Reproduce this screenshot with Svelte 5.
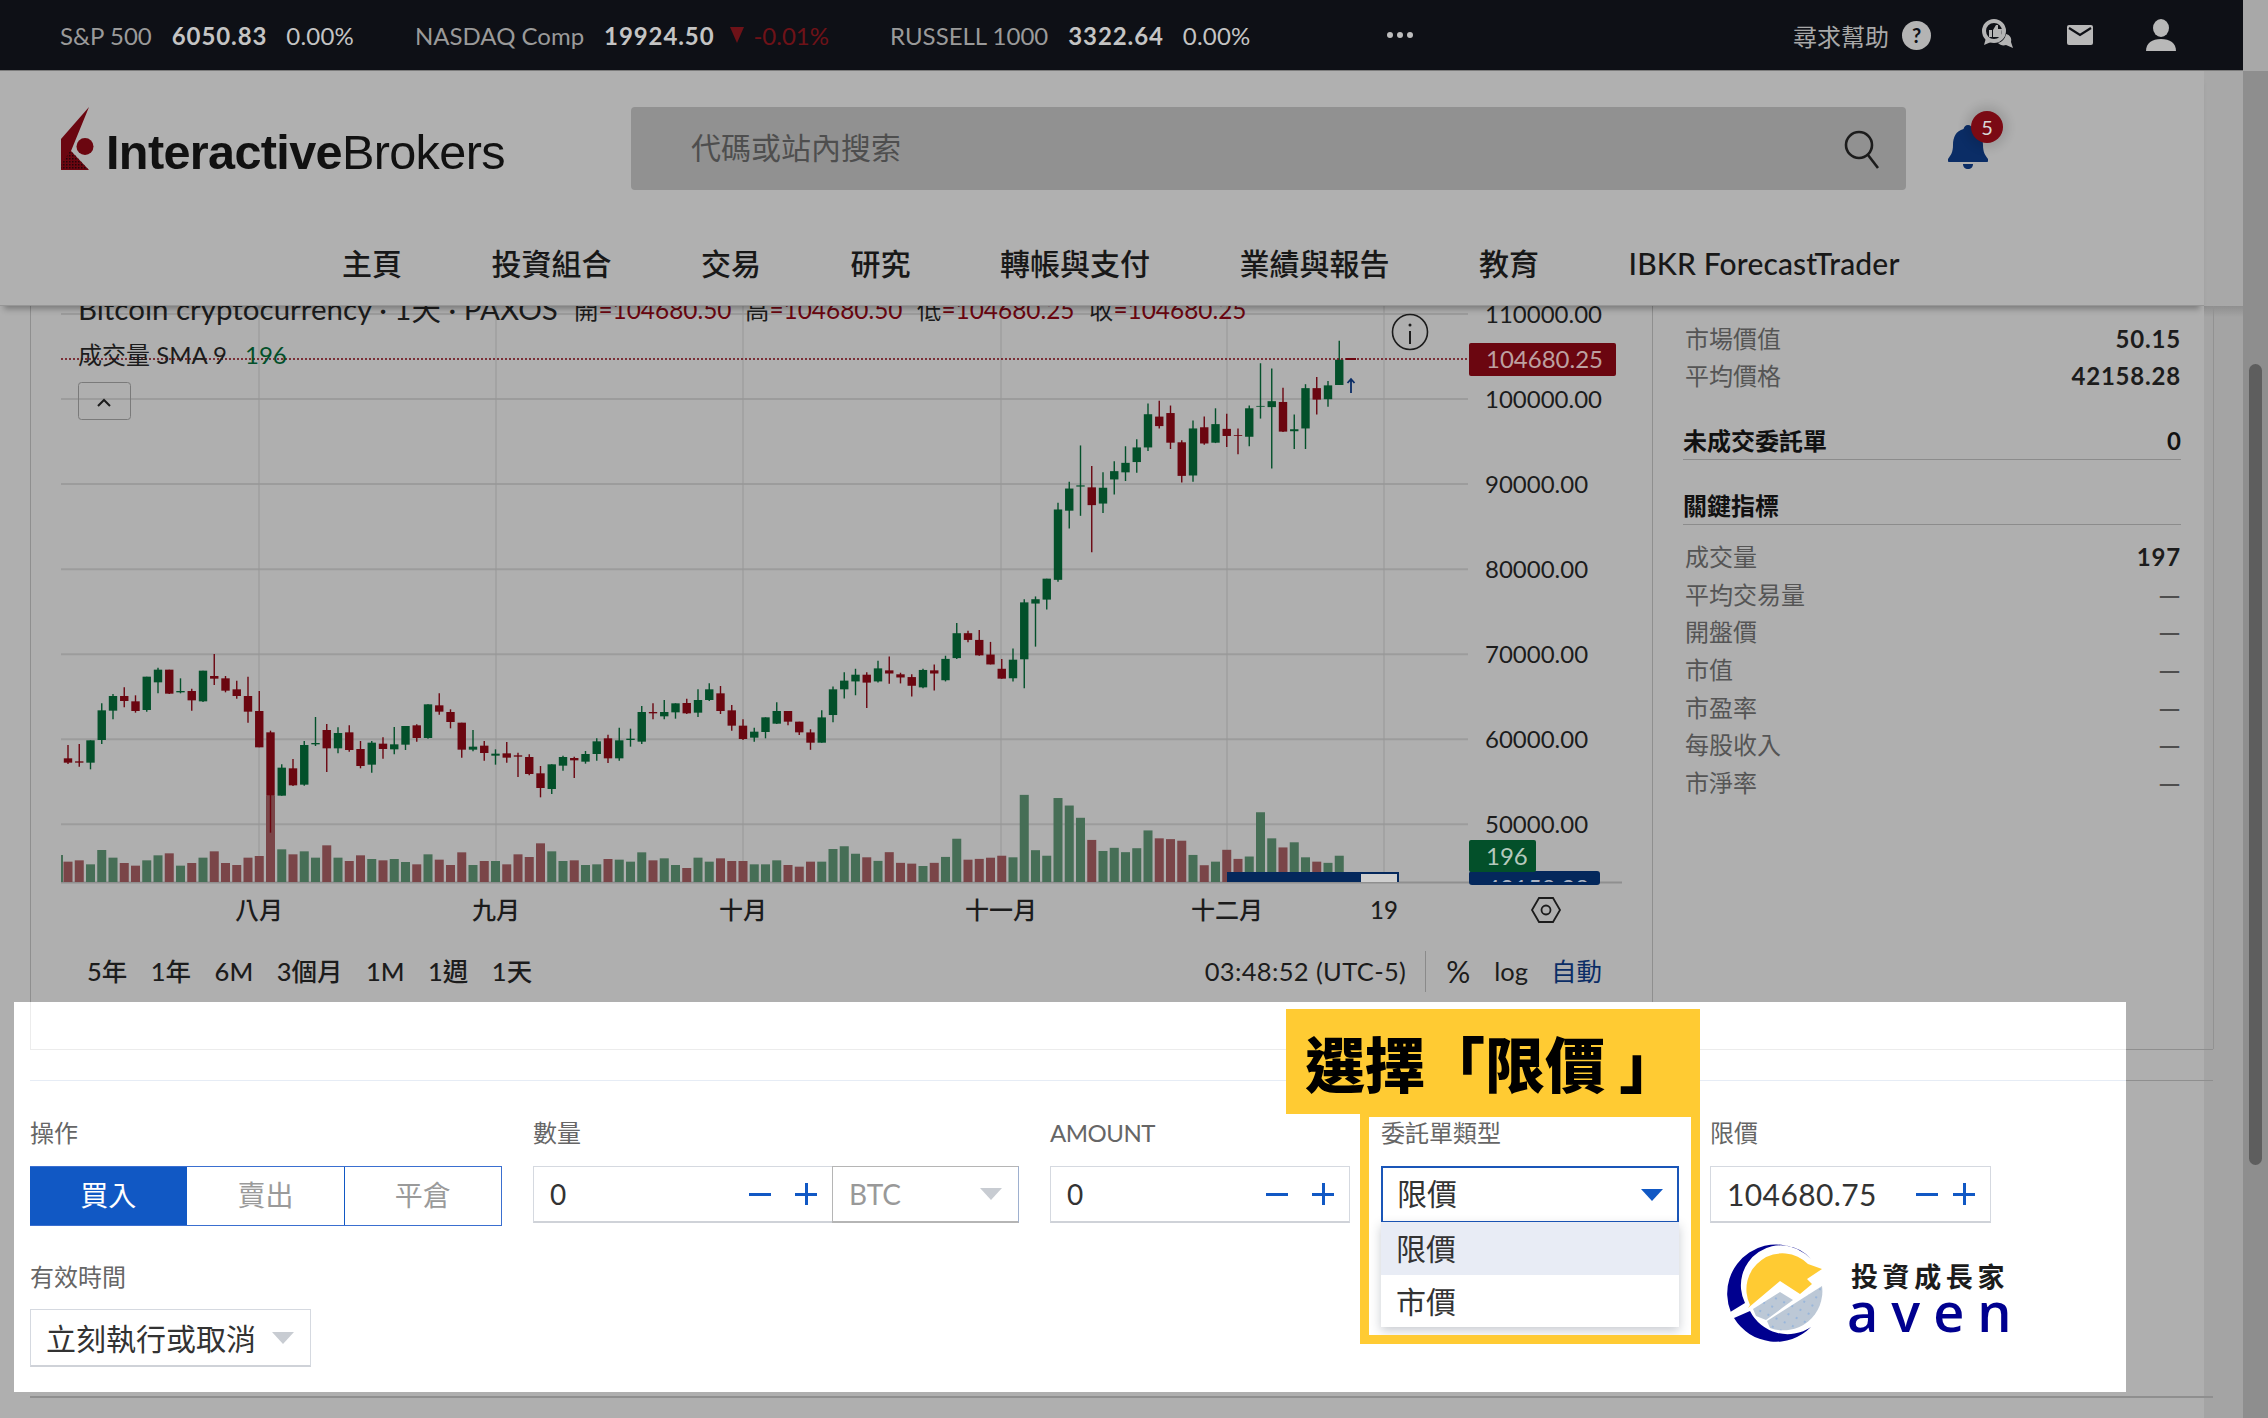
<script>
	// [colour, bodyTop, bodyBottom, wickTop, wickBottom, volumeTop], sampled off the chart
	const early = [
		['r',415,428,375,432,725],['r',424,428,372,440,721],['g',361,428,361,448,733],['g',271,360,250,372,690],
		['g',228,272,222,298,713],['r',228,243,202,262,729],['r',244,273,226,278,737],['g',170,270,170,275,721],
		['g',149,187,143,220,706],['r',149,221,149,222,700],['g',213,217,175,220,737],['r',213,241,206,272,729],
		['g',152,244,152,246,713],['r',168,176,102,195,694],['r',175,212,168,217,729],['r',208,228,182,236,735],
		['r',228,275,170,308,713],['r',273,382,213,382,708],['r',337,527,332,638,527],['g',443,527,433,527,688],
		['r',445,496,417,498,703],['g',375,494,363,497,694],['g',369,373,291,378,713],['r',330,385,312,456,676],
		['g',339,385,322,400,713],['r',337,390,316,395,723],['r',387,438,363,445,706],['g',368,434,363,458,717],
		['r',371,387,352,416,721],['g',373,388,321,403,717],['g',318,374,318,390,726],['r',316,354,313,365,733],
		['g',253,354,253,356,703],['r',256,275,220,284,719],['r',276,306,268,325,735],['r',308,389,308,413,697],
		['g',380,389,330,394,735],['r',377,399,363,422,723],['g',401,407,388,434,723],['r',400,413,366,428,733],
		['r',406,410,398,471,703],['r',411,462,403,466,711],['r',460,504,438,532,670],['g',433,507,433,522,694],
		['g',411,437,407,452,723],['r',414,421,410,474,721],['g',402,425,393,431,735],['g',364,402,355,422,733],
		['r',355,415,344,429,717],['g',361,415,323,422,719],['g',356,360,326,380,725],['g',276,365,258,372,697],
		['r',276,280,250,298,721],['g',276,289,240,298,715],['g',250,277,250,296,735],['r',249,280,236,282,744],
		['g',240,278,208,291,713],['g',208,240,190,243,725],['r',220,273,198,282,715],['r',271,317,255,332,723],
		['r',317,357,298,360,723],['g',335,353,323,365,733],['g',292,336,292,355,733],['g',273,311,247,312,721],
		['r',273,305,273,316,735],['r',305,337,305,345,740]
	];
	const late = [
		['r',1094,1120,1086,1138,1421],['g',1056,1120,1038,1120,1421],['g',985,1050,978,1068,1389],['g',963,985,942,1008,1382],
		['g',948,965,933,1000,1401],['r',948,968,942,1032,1410],['g',932,965,913,968,1419],['r',937,945,902,971,1397],
		['r',947,955,943,970,1424],['r',954,976,947,1003,1426],['g',936,980,933,982,1432],['r',937,945,922,988,1424],
		['g',908,962,900,965,1409],['g',843,906,817,908,1363],['r',843,860,837,866,1416],['r',860,899,835,900,1414],
		['r',897,922,865,922,1411],['r',933,958,908,958,1406],['g',910,957,882,965,1410],['g',765,909,757,982,1252],
		['g',757,768,750,877,1392],['g',705,758,705,783,1406],['g',530,708,513,713,1260],['g',477,533,460,578,1279],
		['g',469,472,368,546,1310],['r',474,519,420,638,1366],['g',475,515,436,539,1394],['g',433,454,408,492,1386],
		['g',412,436,370,458,1397],['g',373,410,352,437,1387],['g',289,373,262,382,1342],['r',295,319,255,325,1362],
		['r',286,361,267,377,1364],['r',360,445,355,462,1368],['g',325,444,305,460,1404],['r',322,363,295,366,1430],
		['g',314,361,274,362,1421],['r',326,344,288,372,1391],['r',342,344,325,390,1414],['g',274,346,267,370,1408],
		['g',268,270,160,300,1296],['g',256,271,173,426,1362],['r',258,333,222,334,1385],['g',327,332,290,377,1372],
		['g',223,325,213,377,1410],['r',223,252,195,290,1421],['g',216,251,205,270,1424],['g',151,215,103,215,1406]
	];

	const toBar = (row, i, fy) => ({
		x: 68 + i * 11.25,
		up: row[0] === 'g',
		top: fy(row[1]),
		bottom: fy(row[2]),
		high: fy(row[3]),
		low: fy(row[4]),
		vol: fy(row[5])
	});
	const bars = [
		...early.map((r, i) => toBar(r, i, (z) => 620 + z / 3)),
		...late.map((r, i) => toBar(r, i + early.length, (z) => 300 + z / 2.53))
	];

	const prices = [110000, 100000, 90000, 80000, 70000, 60000, 50000];
	const priceY = (p) => 314 + ((110000 - p) / 10000) * 85.05;
	const months = [
		{ x: 259, label: '八月' },
		{ x: 496, label: '九月' },
		{ x: 743, label: '十月' },
		{ x: 1001, label: '十一月' },
		{ x: 1227, label: '十二月' },
		{ x: 1384, label: '19' }
	];
	const ohlc = [
		{ x: 574, k: '開', v: '104680.50' },
		{ x: 745, k: '高', v: '104680.50' },
		{ x: 917, k: '低', v: '104680.25' },
		{ x: 1089, k: '收', v: '104680.25' }
	];
	const ranges = ['5年', '1年', '6M', '3個月', '1M', '1週', '1天'];
	const nav = ['主頁', '投資組合', '交易', '研究', '轉帳與支付', '業績與報告', '教育'];
	const metrics = [
		['成交量', '197'], ['平均交易量', '—'], ['開盤價', '—'], ['市值', '—'],
		['市盈率', '—'], ['每股收入', '—'], ['市淨率', '—']
	];
</script>

<div class="page">
	<div class="main">
		<div class="topbar">
			<div class="tick"><span>S&amp;P 500</span><b>6050.83</b><b class="pct">0.00%</b></div>
			<div class="tick">
				<span>NASDAQ Comp</span><b>19924.50</b>
				<i class="down"></i><em>-0.01%</em>
			</div>
			<div class="tick"><span>RUSSELL 1000</span><b>3322.64</b><b class="pct">0.00%</b></div>
			<div class="more"><i></i><i></i><i></i></div>
			<div class="top-right">
				<span class="help">尋求幫助</span>
				<span class="qmark">?</span>
				<svg class="chat" viewBox="0 0 34 32" width="34" height="32">
					<circle cx="13" cy="12" r="10" fill="none" stroke="#b4b4b4" stroke-width="4" />
					<path d="M8 11h3v7H8zM12 11l3-5h2v4h4l-1 8h-8z" fill="#b4b4b4" />
					<path d="M5 19l-2 7 7-3z" fill="#b4b4b4" />
					<path d="M25 15c4 1 6 4 5 8l2 6-7-3c-3 1-6 0-8-2 4-1 7-4 8-9z" fill="#b4b4b4" />
				</svg>
				<svg class="mail" viewBox="0 0 26 20" width="26" height="20">
					<rect width="26" height="20" rx="2" fill="#b8b8b8" />
					<path d="M2 3l11 7 11-7" fill="none" stroke="#0e1016" stroke-width="2.2" />
				</svg>
				<svg class="person" viewBox="0 0 30 32" width="30" height="32">
					<ellipse cx="15" cy="9" rx="8" ry="9" fill="#b8b8b8" />
					<path d="M0 32c0-8 6-12 15-12s15 4 15 12z" fill="#b8b8b8" />
				</svg>
			</div>
		</div>

		<div class="under">
			<div class="col">
				<header>
					<div class="brand-row">
						<div class="logo">
							<svg viewBox="0 0 36 64" width="36" height="64">
								<defs>
									<pattern id="dither" width="3" height="3" patternUnits="userSpaceOnUse">
										<rect width="1.5" height="1.5" fill="#24040a" />
									</pattern>
								</defs>
								<path d="M29 0L1 32v31h28L11 44z" fill="#6b0610" />
								<path d="M1 63V58L10 44l3 2 16 17z" fill="url(#dither)" />
								<circle cx="25" cy="39.5" r="8.5" fill="#6b0610" />
							</svg>
							<span class="logo-text"><b>Interactive</b>Brokers</span>
						</div>
						<div class="search">
							<span>代碼或站內搜索</span>
							<svg viewBox="0 0 36 40" width="36" height="40">
								<circle cx="15" cy="16" r="13" fill="none" stroke="#1c1c1c" stroke-width="2.6" />
								<path d="M24 26l10 13" stroke="#1c1c1c" stroke-width="2.6" />
							</svg>
						</div>
						<div class="bell">
							<svg viewBox="0 0 40 44" width="40" height="44">
								<path d="M20 0c-2.500 0-4 2-4.500 4C8 6 5 12 5 20c0 7-2 10-5 14-1 2 0 3 2 3h36c2 0 3-1 2-3-3-4-5-7-5-14 0-8-3-14-10.500-16C24 2 22.500 0 20 0z" fill="#0b2d66" />
								<path d="M15 39h10c0 3-2 5-5 5s-5-2-5-5z" fill="#0b2d66" />
							</svg>
							<span class="badge">5</span>
						</div>
					</div>
					<nav>
						{#each nav as item}
							<span>{item}</span>
						{/each}
						<span class="nav-latin">IBKR ForecastTrader</span>
					</nav>
				</header>

				<div class="content">
					<div class="chart-panel">
						<svg class="chart" viewBox="30 306 1622 634" width="1622" height="634">
							<defs>
								<clipPath id="axis-clip"><rect x="1469" y="820" width="140" height="62" /></clipPath>
							</defs>
							{#each prices as p}
								<line x1="61" x2="1468" y1={priceY(p)} y2={priceY(p)} stroke="#9c9c9c" stroke-width="2" />
							{/each}
							{#each months as m}
								<line x1={m.x} x2={m.x} y1="306" y2="882" stroke="#979797" />
							{/each}
							<line x1="61" x2="1622" y1="882.5" y2="882.5" stroke="#8f8f8f" stroke-width="2" />

							<rect x="61" y="855" width="2" height="27" fill="#466e56" />
							{#each bars as b}
								<rect x={b.x - 4.5} y={b.vol} width="9" height={882 - b.vol} fill={b.up ? '#466e56' : '#7a4548'} />
							{/each}
							{#each bars as b}
								<line x1={b.x} x2={b.x} y1={b.high} y2={b.low} stroke={b.up ? '#03502a' : '#6b0610'} stroke-width="1.4" />
								<rect x={b.x - 4.2} y={b.top} width="8.4" height={b.bottom - b.top} fill={b.up ? '#03502a' : '#6b0610'} />
							{/each}

							<line x1="61" x2="1469" y1="359" y2="359" stroke="#6b0610" stroke-width="1.4" stroke-dasharray="2 2" />
							<line x1="1346" x2="1356" y1="359" y2="359" stroke="#6b0610" stroke-width="2" />
							<path d="M1351 393v-14m-3.500 4l3.500-4 3.500 4" fill="none" stroke="#0b2d66" stroke-width="1.8" />

							<text class="title" x="78" y="320">Bitcoin cryptocurrency · 1天 · PAXOS</text>
							{#each ohlc as o}
								<text class="ohlc" x={o.x} y="319">{o.k}<tspan class="red">={o.v}</tspan></text>
							{/each}
							<text class="study" x="78" y="364">成交量 SMA 9</text>
							<text class="study green" x="245" y="364">196</text>

							<rect x="78.500" y="382.500" width="52" height="37" rx="3" fill="none" stroke="#7a7a7a" />
							<path d="M98 406l6-6 6 6" fill="none" stroke="#1c1c1c" stroke-width="2" />

							<circle cx="1410" cy="332" r="17.500" fill="none" stroke="#1c1c1c" stroke-width="1.600" />
							<rect x="1409" y="331" width="2" height="13" fill="#1c1c1c" />
							<circle cx="1410" cy="325" r="1.500" fill="#1c1c1c" />

							{#each prices as p}
								<text class="axis" x="1485" y={priceY(p) + 9}>{p}.00</text>
							{/each}

							<rect x="1469" y="343" width="147" height="33" rx="2" fill="#6b0610" />
							<text class="axis tag-red" x="1486" y="368">104680.25</text>
							<rect x="1469" y="871" width="131" height="14" rx="3" fill="#04285c" />
							<text class="axis tag-blue" x="1486" y="897" clip-path="url(#axis-clip)">42158.28</text>
							<rect x="1469" y="840" width="67" height="32" rx="2" fill="#03502a" />
							<text class="axis tag-green" x="1486" y="865">196</text>

							<rect x="1227" y="872" width="172" height="10" fill="#cfcfcf" />
							<rect x="1227" y="872" width="134" height="10" fill="#04285c" />
							<path d="M1227 873h171v9" fill="none" stroke="#04285c" stroke-width="2" />

							{#each months as m}
								<text class="month" x={m.x} y="919" text-anchor="middle">{m.label}</text>
							{/each}
							<path d="M1539 898h14l7 12-7 12h-14l-7-12z" fill="none" stroke="#1c1c1c" stroke-width="1.800" />
							<circle cx="1546" cy="910" r="4.500" fill="none" stroke="#1c1c1c" stroke-width="1.800" />
						</svg>

						<div class="toolbar">
							<div class="ranges">
								{#each ranges as r}
									<span>{r}</span>
								{/each}
							</div>
							<div class="tools">
								<span class="clock">03:48:52 (UTC-5)</span>
								<span class="sep"></span>
								<span class="percent">%</span>
								<span class="log">log</span>
								<span class="auto">自動</span>
							</div>
						</div>
					</div>

					<aside>
						<div class="row"><span>市場價值</span><b>50.15</b></div>
						<div class="row"><span>平均價格</span><b>42158.28</b></div>
						<div class="heading open-orders"><strong>未成交委託單</strong><b>0</b></div>
						<div class="heading key"><strong>關鍵指標</strong></div>
						{#each metrics as [label, value]}
							<div class="row">
								<span>{label}</span>
								<b class:dash={value === '—'}>{value}</b>
							</div>
						{/each}
					</aside>
				</div>

				<div class="order">
					<div class="highlight">
						<div class="panel-end"></div>
						<div class="divider"></div>

						<div class="fields">
							<div class="field">
								<label>操作</label>
								<div class="segments">
									<span class="on">買入</span>
									<span>賣出</span>
									<span>平倉</span>
								</div>
							</div>
							<div class="field">
								<label>數量</label>
								<div class="joined">
									<div class="input qty">
										<span>0</span>
										<div class="steps"><i class="minus"></i><i class="plus"></i></div>
									</div>
									<div class="btc"><span>BTC</span><i class="tri"></i></div>
								</div>
							</div>
							<div class="field">
								<label class="latin">AMOUNT</label>
								<div class="input amount">
									<span>0</span>
									<div class="steps"><i class="minus"></i><i class="plus"></i></div>
								</div>
							</div>
							<div class="field type">
								<label>委託單類型</label>
								<div class="select-open"><span>限價</span><i class="tri blue"></i></div>
								<ul class="options">
									<li class="current">限價</li>
									<li>市價</li>
								</ul>
							</div>
							<div class="field">
								<label>限價</label>
								<div class="input limit">
									<span>104680.75</span>
									<div class="steps"><i class="minus"></i><i class="plus"></i></div>
								</div>
							</div>
						</div>

						<div class="field tif">
							<label>有效時間</label>
							<div class="select"><span>立刻執行或取消</span><i class="tri"></i></div>
						</div>

						<div class="callout"><span>選擇「限價 」</span></div>
						<div class="callout-frame"></div>

						<svg class="watermark" viewBox="0 0 340 140" width="340" height="140">
							<defs>
								<pattern id="dots" width="9" height="9" patternUnits="userSpaceOnUse" patternTransform="rotate(25)">
									<circle cx="3" cy="3" r="0.8" fill="#6d9ee0" />
								</pattern>
							</defs>
							<path d="M111 39A49 49 0 0 0 30.700 91.700L45 83A40 40 0 0 1 111 39z" fill="#00008f" />
							<path d="M34 98L50 91A42 42 0 0 0 111 107A49 49 0 0 1 34 98z" fill="#00008f" />
							<path d="M50 85A36 36 0 0 1 108 44L122 49 107 59 112 64 100 74 80 61 48 88z" fill="#ffcb33" />
							<path d="M53 89L80 72 93 80 66 100 56 96z" fill="#bcc8d6" />
							<path d="M67 101L122 66A39 39 0 0 1 70 108z" fill="#bcc8d6" />
							<path d="M53 89L80 72 93 80 66 100 56 96z" fill="url(#dots)" />
							<path d="M67 101L122 66A39 39 0 0 1 70 108z" fill="url(#dots)" />
							<text class="wm-cn" x="151" y="67">投資成長家</text>
							<text class="wm-en" x="147" y="112">aven</text>
						</svg>
					</div>
					<div class="bottom-rule"></div>
				</div>
			</div>

			<div class="gutter"><div class="gutter-line"></div></div>
		</div>
	</div>

	<div class="track"><div class="thumb"></div></div>

	<div class="stub stub-a"></div>
	<div class="stub stub-b"></div>
</div>

<style>
	:global(body) {
		margin: 0;
		background: #afafaf;
	}

	.page {
		position: relative;
		display: flex;
		width: 2268px;
		height: 1418px;
		overflow: hidden;
		font-family: 'Lato', 'Noto Sans CJK TC', sans-serif;
		color: #1c1c1c;
		background: #afafaf;
	}

	.main {
		width: 2243px;
		display: flex;
		flex-direction: column;
	}

	/* ticker strip */
	.topbar {
		height: 71px;
		flex: none;
		display: flex;
		align-items: center;
		padding-left: 60px;
		gap: 61px;
		background: #0e1016;
		border-bottom: 1px solid #7c7c7c;
		box-sizing: border-box;
		font-size: 24px;
		color: #9a9a9a;
	}

	.tick {
		display: flex;
		align-items: center;
	}

	.tick b {
		margin-left: 20px;
		font-weight: 700;
		color: #c4c4c4;
		letter-spacing: 0.9px;
	}

	.tick b.pct {
		margin-left: 19px;
		font-weight: 400;
		letter-spacing: 0.2px;
	}

	.tick em {
		margin-left: 9px;
		font-style: normal;
		color: #6e1218;
	}

	.down {
		margin-left: 16px;
		width: 0;
		height: 0;
		border-left: 7px solid transparent;
		border-right: 7px solid transparent;
		border-top: 16px solid #6e1218;
	}

	.more {
		display: flex;
		gap: 4px;
		margin-left: 76px;
	}

	.more i {
		width: 6px;
		height: 6px;
		border-radius: 50%;
		background: #bdbdbd;
	}

	.top-right {
		display: flex;
		align-items: center;
		margin-left: auto;
		padding-right: 67px;
	}

	.help {
		font-size: 24px;
		color: #a8a8a8;
		margin-right: 13px;
	}

	.qmark {
		width: 29px;
		height: 29px;
		border-radius: 50%;
		background: #b4b4b4;
		color: #0e1016;
		font-size: 20px;
		font-weight: 700;
		display: flex;
		align-items: center;
		justify-content: center;
	}

	.chat {
		margin-left: 50px;
	}

	.mail {
		margin-left: 52px;
	}

	.person {
		margin-left: 53px;
	}

	.under {
		flex: 1;
		display: flex;
		min-height: 0;
	}

	.col {
		width: 2204px;
		flex: none;
		display: flex;
		flex-direction: column;
	}

	.gutter {
		width: 39px;
		flex: none;
		box-sizing: border-box;
		padding: 235px 0 0 9px;
		background: linear-gradient(#a8a8a8 0 235px, #8f8f8f 235px, #a4a4a4 246px);
	}

	.gutter-line {
		width: 1px;
		height: 743px;
		background: #929292;
	}

	/* header */
	header {
		position: relative;
		z-index: 2;
		height: 235px;
		flex: none;
		box-sizing: border-box;
		background: #b0b0b0;
		border-bottom: 1px solid #969696;
		box-shadow: 0 7px 6px -4px rgba(0, 0, 0, 0.3);
		padding-top: 36px;
	}

	.brand-row {
		display: flex;
		height: 83px;
		padding-left: 60px;
	}

	.logo {
		width: 571px;
		display: flex;
		align-items: flex-end;
		height: 64px;
		gap: 10px;
	}

	.logo svg {
		flex: none;
	}

	.logo-text {
		font-family: 'Liberation Sans', sans-serif;
		font-size: 48.6px;
		line-height: 1;
		letter-spacing: -0.65px;
		color: #111;
		margin-bottom: -6px;
	}

	.search {
		width: 1275px;
		flex: none;
		box-sizing: border-box;
		display: flex;
		align-items: center;
		justify-content: space-between;
		padding: 0 26px 0 60px;
		background: #919191;
		border-radius: 4px;
		font-size: 30px;
		color: #4e4e4e;
	}

	.search span {
		margin-bottom: 5px;
	}

	.bell {
		position: relative;
		height: 44px;
		margin: 18px 0 0 42px;
	}

	.badge {
		position: absolute;
		left: 23px;
		top: -14px;
		width: 32px;
		height: 32px;
		border-radius: 50%;
		background: #7b0a14;
		box-shadow: 0 0 8px 6px rgba(0, 0, 0, 0.1);
		color: #d8d8d8;
		font-size: 20px;
		display: flex;
		align-items: center;
		justify-content: center;
	}

	nav {
		display: flex;
		gap: 89.5px;
		margin-top: 53px;
		padding-left: 342px;
		font-size: 30px;
		font-weight: 500;
		line-height: 40px;
		color: #181818;
	}

	.nav-latin {
		letter-spacing: 0.15px;
	}

	/* chart + side column */
	.content {
		height: 696px;
		flex: none;
		display: flex;
	}

	.chart-panel {
		width: 1622px;
		margin-left: 30px;
		flex: none;
		box-sizing: border-box;
		border-left: 1px solid #8f8f8f;
		position: relative;
	}

	.chart {
		display: block;
		margin-left: -1px;
	}

	.chart text {
		font-family: 'Lato', 'Noto Sans CJK TC', sans-serif;
		fill: #1c1c1c;
	}

	.chart .title {
		font-size: 29.5px;
	}

	.chart .ohlc {
		font-size: 24.4px;
	}

	.chart .red {
		fill: #6b0610;
	}

	.chart .study {
		font-size: 24px;
	}

	.chart .green {
		fill: #03502a;
	}

	.chart .axis {
		font-size: 24px;
	}

	.chart .tag-red {
		fill: #bda0a0;
	}

	.chart .tag-green {
		fill: #b5c9bc;
	}

	.chart .tag-blue {
		fill: #aab4c4;
	}

	.chart .month {
		font-size: 24px;
		font-weight: 500;
	}

	.toolbar {
		display: flex;
		align-items: center;
		justify-content: space-between;
		height: 62px;
		padding: 0 50px 0 56px;
		font-size: 25.5px;
		line-height: 40px;
	}

	.ranges {
		display: flex;
		gap: 23.5px;
		font-weight: 500;
	}

	.tools {
		display: flex;
		align-items: center;
	}

	.clock {
		letter-spacing: 0.35px;
	}

	.sep {
		width: 1px;
		height: 41px;
		background: #8a8a8a;
		margin: 0 20px 0 19px;
	}

	.percent {
		font-size: 30px;
		margin-right: 24px;
	}

	.log {
		margin-right: 23px;
	}

	.auto {
		color: #0b2d66;
	}

	aside {
		flex: 1;
		box-sizing: border-box;
		border-left: 1px solid #8f8f8f;
		padding: 13.5px 23px 0 32px;
		font-size: 24px;
	}

	.row {
		display: flex;
		justify-content: space-between;
		height: 37.6px;
		line-height: 37.6px;
		color: #555;
	}

	.row b {
		font-weight: 700;
		color: #1c1c1c;
		letter-spacing: 0.8px;
	}

	.row b.dash {
		font-size: 29px;
		font-weight: 400;
		color: #4e4e4e;
		letter-spacing: 0;
	}

	.heading {
		display: flex;
		justify-content: space-between;
		margin-left: -2px;
		border-bottom: 1px solid #8c8c8c;
		line-height: 34px;
		padding-bottom: 1px;
	}

	.heading strong {
		font-weight: 700;
		color: #111;
	}

	.heading b {
		font-weight: 700;
		color: #111;
	}

	.open-orders {
		margin-top: 29px;
	}

	.key {
		margin-top: 29px;
		margin-bottom: 13.5px;
	}

	/* order ticket */
	.order {
		flex: 1;
		display: flex;
		flex-direction: column;
	}

	.highlight {
		position: relative;
		margin-left: 14px;
		width: 2112px;
		height: 390px;
		background: #fff;
	}

	.panel-end {
		margin-left: 16px;
		height: 47px;
		border-left: 1px solid #ececec;
		border-bottom: 1px solid #ececec;
	}

	.divider {
		margin: 30px 0 0 16px;
		border-top: 1px solid #e6ecf5;
	}

	.fields {
		display: flex;
		gap: 31px;
		margin: 35px 0 0 16px;
		align-items: flex-start;
	}

	.field {
		position: relative;
	}

	label {
		display: block;
		font-size: 24px;
		line-height: 34px;
		margin-bottom: 16px;
		color: #666;
	}

	label.latin {
		letter-spacing: -0.5px;
	}

	.segments {
		display: flex;
		width: 472px;
		height: 60px;
		box-sizing: border-box;
		border: 1.5px solid #3a6fd0;
		border-left: 0;
		font-size: 28px;
		color: #9a9a9a;
	}

	.segments span {
		flex: 1;
		display: flex;
		align-items: center;
		justify-content: center;
		padding-bottom: 5px;
		border-left: 1.5px solid #1158c4;
	}

	.segments span:first-child {
		border-left: 0;
	}

	.segments .on {
		background: #1158c4;
		color: #fff;
	}

	.joined {
		display: flex;
	}

	.input {
		display: flex;
		align-items: center;
		justify-content: space-between;
		box-sizing: border-box;
		height: 57px;
		padding: 0 14px 0 16px;
		border: 1px solid #d5d9e0;
		border-bottom: 2px solid #cfd2d8;
		font-size: 28px;
		color: #333;
	}

	.qty {
		width: 299px;
		border-right: 0;
	}

	.amount {
		width: 300px;
	}

	.limit {
		width: 281px;
		font-size: 30px;
		letter-spacing: 0.4px;
	}

	.steps {
		display: flex;
		align-items: center;
		gap: 22px;
	}

	.limit .steps {
		gap: 13px;
	}

	.steps i {
		position: relative;
		display: block;
		width: 24px;
		height: 24px;
	}

	.minus::before,
	.plus::before {
		content: '';
		position: absolute;
		left: 1px;
		right: 1px;
		top: 11px;
		height: 3px;
		background: #1158c4;
	}

	.plus::after {
		content: '';
		position: absolute;
		top: 1px;
		bottom: 1px;
		left: 11px;
		width: 3px;
		background: #1158c4;
	}

	.btc {
		display: flex;
		align-items: center;
		justify-content: space-between;
		box-sizing: border-box;
		width: 187px;
		height: 57px;
		padding: 0 16px;
		border: 1.5px solid #b5b5b5;
		border-bottom-width: 2px;
		border-right-color: #9eb0cf;
		font-size: 28px;
		color: #999;
	}

	.tri {
		width: 0;
		height: 0;
		border-left: 11px solid transparent;
		border-right: 11px solid transparent;
		border-top: 12px solid #c8ccd2;
	}

	.tri.blue {
		border-top-color: #1158c4;
	}

	.select-open {
		display: flex;
		align-items: center;
		justify-content: space-between;
		box-sizing: border-box;
		width: 298px;
		height: 57px;
		padding: 0 14px;
		border: 2px solid #1a56b8;
		font-size: 30px;
		color: #333;
	}

	.select-open span {
		margin-bottom: 5px;
	}

	.options {
		position: absolute;
		left: 0;
		top: 106px;
		width: 298px;
		margin: 0;
		padding: 0;
		list-style: none;
		background: #fff;
		box-shadow: 0 4px 10px rgba(40, 50, 70, 0.25);
		font-size: 30px;
		color: #333;
	}

	.options li {
		height: 52.5px;
		line-height: 52.5px;
		padding-left: 15px;
	}

	.options .current {
		background: #e8ecf5;
	}

	.tif {
		margin: 34px 0 0 16px;
	}

	.select {
		display: flex;
		align-items: center;
		gap: 16px;
		box-sizing: border-box;
		width: 281px;
		height: 58px;
		padding: 0 15px;
		border: 1px solid #d5d9e0;
		border-bottom: 2px solid #cfd2d8;
		font-size: 30px;
		white-space: nowrap;
		color: #333;
	}

	.select span {
		margin-bottom: 2px;
	}

	.tif label {
		margin-bottom: 15px;
	}

	.callout {
		position: absolute;
		left: 1272px;
		top: 7px;
		width: 414px;
		height: 105px;
		box-sizing: border-box;
		padding-left: 19px;
		display: flex;
		align-items: center;
		background: #ffcb33;
		font-size: 60px;
		font-weight: 900;
		color: #000;
		white-space: nowrap;
	}

	.callout-frame {
		position: absolute;
		left: 1346px;
		top: 112px;
		width: 340px;
		height: 230px;
		box-sizing: border-box;
		border: 9px solid #ffcb33;
		border-top-width: 3px;
		pointer-events: none;
	}

	.watermark {
		position: absolute;
		left: 1686px;
		top: 218px;
	}

	.wm-cn {
		font-family: 'Noto Sans CJK TC', sans-serif;
		font-size: 27px;
		font-weight: 700;
		letter-spacing: 4.6px;
		fill: #1c1c1c;
	}

	.wm-en {
		font-family: 'Open Sans', sans-serif;
		font-size: 54px;
		font-weight: 600;
		letter-spacing: 13px;
		fill: #00008f;
	}

	.bottom-rule {
		position: relative;
		margin: 4px 0 0 30px;
		width: 2183px;
		height: 2px;
		background: #8f8f8f;
	}

	/* page scrollbar */
	.track {
		flex: 1;
		padding: 364px 0 0 6px;
		background: linear-gradient(#a8a8a8 0 71px, #8e8e8e 71px);
	}

	.thumb {
		width: 13px;
		height: 801px;
		border-radius: 7px;
		background: #5e5e5e;
	}

	.stub {
		position: absolute;
		left: 2126px;
		width: 87px;
		height: 1px;
		background: #8f8f8f;
	}

	.stub-a {
		top: 1049px;
	}

	.stub-b {
		top: 1080px;
	}
</style>
